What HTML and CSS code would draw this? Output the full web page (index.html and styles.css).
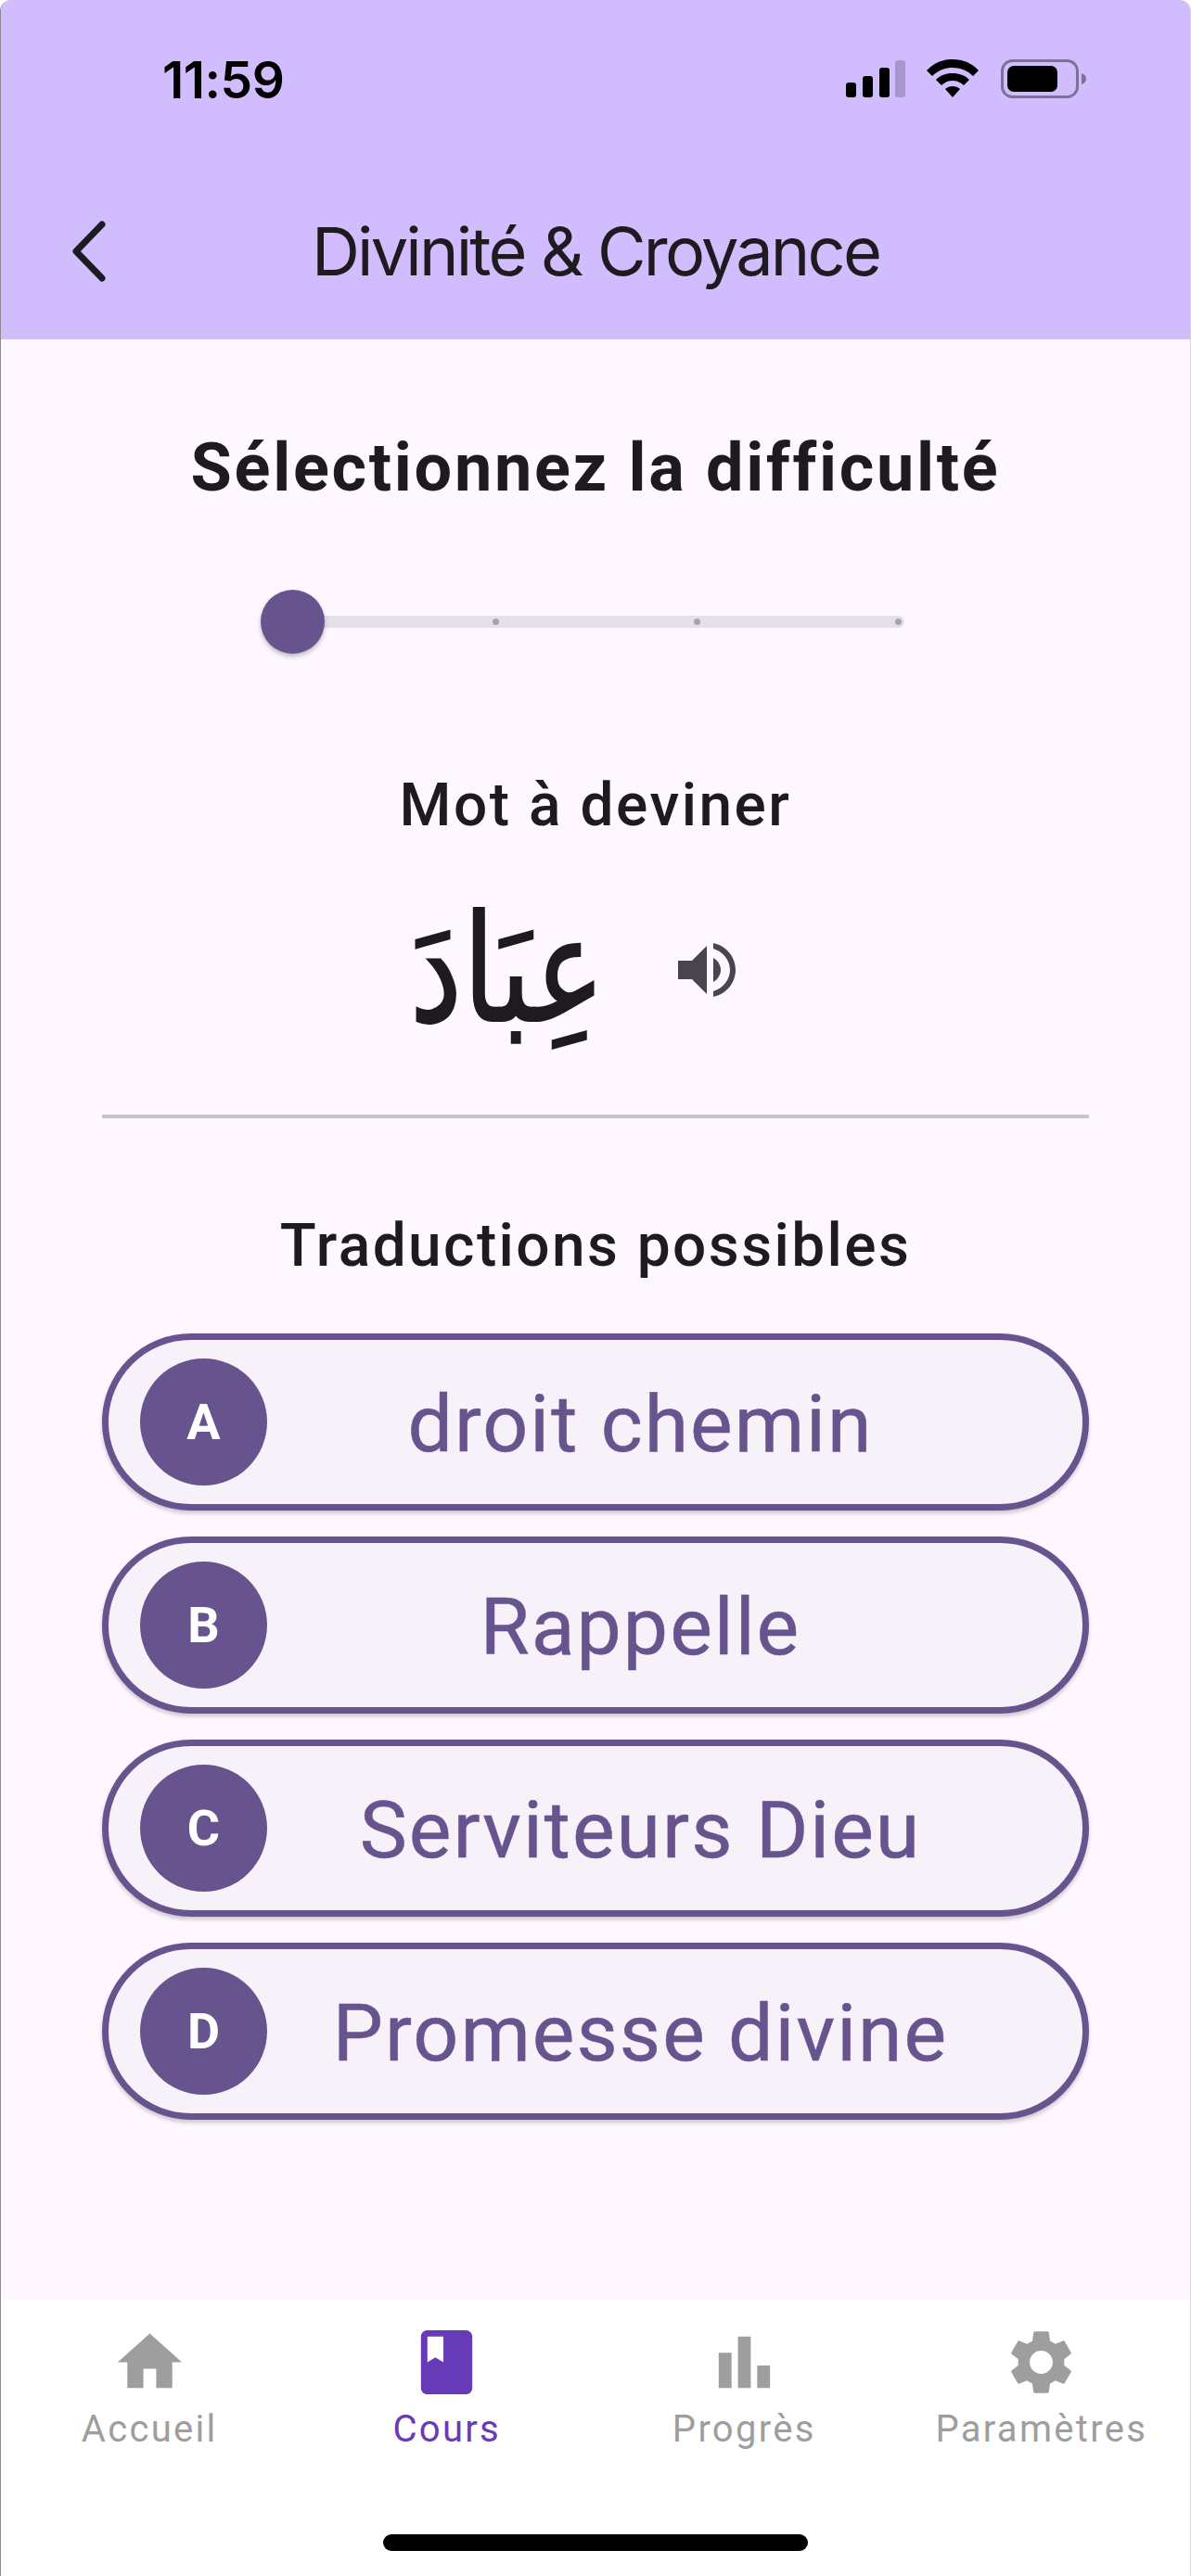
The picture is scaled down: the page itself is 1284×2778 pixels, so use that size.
FILE: index.html
```html
<!DOCTYPE html>
<html lang="fr">
<head>
    <meta charset="UTF-8">
    <title>Divinité &amp; Croyance</title>
    <link rel="stylesheet" href="styles.css">
</head>
<body>
    <div class="phone">
        <header class="top">
            <div class="status">
                <span class="time">11:59</span>
                <div class="status-icons">
                    <svg class="signal" width="64" height="40" viewBox="0 0 64 40">
                        <rect x="0" y="24" width="11" height="16" rx="3"/>
                        <rect x="18" y="17" width="11" height="23" rx="3"/>
                        <rect x="36" y="8" width="11" height="32" rx="3"/>
                        <rect x="53" y="0" width="11" height="40" rx="3" opacity="0.2"/>
                    </svg>
                    <svg class="wifi" width="58" height="42" viewBox="0 0 58 42">
                        <path d="M29 0C18 0 8 4 1 12l6 6c6-6 14-9 22-9s16 3 22 9l6-6C50 4 40 0 29 0z"/>
                        <path d="M29 15c-7 0-13 2-18 7l6 6c3-3 7-5 12-5s9 2 12 5l6-6c-5-5-11-7-18-7z"/>
                        <path d="M29 29c-3 0-6 1-8 3l8 9 8-9c-2-2-5-3-8-3z"/>
                    </svg>
                    <svg class="battery" width="93" height="42" viewBox="0 0 93 42">
                        <rect x="1.5" y="1.5" width="81" height="39" rx="11" fill="none" stroke="#000" stroke-opacity="0.4" stroke-width="3"/>
                        <rect x="7" y="7" width="54" height="28" rx="7"/>
                        <path d="M87 15c3 1 5 3 5 6s-2 5-5 6z" opacity="0.4"/>
                    </svg>
                </div>
            </div>
            <div class="appbar">
                <svg class="back" width="40" height="66" viewBox="0 0 40 66">
                    <path d="M34 4 6 33l28 29" fill="none" stroke="#1d1b20" stroke-width="7" stroke-linecap="round" stroke-linejoin="round"/>
                </svg>
                <h1>Divinité &amp; Croyance</h1>
            </div>
        </header>

        <main class="content">
            <h2 class="difficulty-title">Sélectionnez la difficulté</h2>
            <div class="slider">
                <div class="thumb"></div>
                <i class="tick"></i>
                <i class="tick"></i>
                <i class="tick"></i>
            </div>

            <h3 class="word-label">Mot à deviner</h3>
            <div class="word-row">
                <span class="word" lang="ar" dir="rtl">عِبَادَ</span>
                <svg class="speaker" width="62" height="58" viewBox="0 0 62 58">
                    <path d="M0 19h15L31 3v52L15 39H0z"/>
                    <path d="M38 16c5 3 8 8 8 13s-3 10-8 13z"/>
                    <path d="M38 0c14 3 24 15 24 29s-10 26-24 29v-6c10-3 18-12 18-23S48 9 38 6z"/>
                </svg>
            </div>
            <hr class="divider">

            <h3 class="options-title">Traductions possibles</h3>
            <div class="options">
                <div class="option"><span class="letter">A</span><span class="option-text">droit chemin</span></div>
                <div class="option"><span class="letter">B</span><span class="option-text">Rappelle</span></div>
                <div class="option"><span class="letter">C</span><span class="option-text">Serviteurs Dieu</span></div>
                <div class="option"><span class="letter">D</span><span class="option-text">Promesse divine</span></div>
            </div>
        </main>

        <nav class="tabs">
            <div class="tab">
                <svg viewBox="0 0 24 24"><path d="M10 20v-6h4v6h5v-8h3L12 3 2 12h3v8z"/></svg>
                <span>Accueil</span>
            </div>
            <div class="tab active">
                <svg viewBox="0 0 24 24"><path fill-rule="evenodd" d="M18 2H6c-1.1 0-2 .9-2 2v16c0 1.1.9 2 2 2h12c1.1 0 2-.9 2-2V4c0-1.1-.9-2-2-2zM6 4h5v8l-2.5-1.5L6 12V4z"/></svg>
                <span>Cours</span>
            </div>
            <div class="tab">
                <svg viewBox="0 0 24 24"><path d="M4 9h4v11H4zm12 4h4v7h-4zm-6-9h4v16h-4z"/></svg>
                <span>Progrès</span>
            </div>
            <div class="tab">
                <svg viewBox="0 0 24 24"><path d="M19.14 12.94c.04-.3.06-.61.06-.94 0-.32-.02-.64-.07-.94l2.03-1.58c.18-.14.23-.41.12-.61l-1.92-3.32c-.12-.22-.37-.29-.59-.22l-2.39.96c-.5-.38-1.03-.7-1.62-.94l-.36-2.54c-.04-.24-.24-.41-.48-.41h-3.84c-.24 0-.43.17-.47.41l-.36 2.54c-.59.24-1.13.57-1.62.94l-2.39-.96c-.22-.08-.47 0-.59.22L2.74 8.87c-.12.21-.08.47.12.61l2.03 1.58c-.05.3-.09.63-.09.94s.02.64.07.94l-2.03 1.58c-.18.14-.23.41-.12.61l1.92 3.32c.12.22.37.29.59.22l2.39-.96c.5.38 1.03.7 1.62.94l.36 2.54c.05.24.24.41.48.41h3.84c.24 0 .44-.17.47-.41l.36-2.54c.59-.24 1.13-.56 1.62-.94l2.39.96c.22.08.47 0 .59-.22l1.92-3.32c.12-.22.07-.47-.12-.61l-2.01-1.58zM12 15.6c-1.98 0-3.6-1.62-3.6-3.6s1.62-3.6 3.6-3.6 3.6 1.62 3.6 3.6-1.62 3.6-3.6 3.6z"/></svg>
                <span>Paramètres</span>
            </div>
        </nav>
        <div class="home-bar"><div class="home-indicator"></div></div>
    </div>
</body>
</html>
```

FILE: styles.css
```css
* {
    box-sizing: border-box;
}
body {
    margin: 0;
    background: #fff;
    font-family: Roboto, "Noto Sans", sans-serif;
    color: #1d1b20;
}
.phone {
    width: 1284px;
    height: 2778px;
    display: flex;
    flex-direction: column;
    background: #fef7ff;
    border-left: 1px solid #8d8a92;
    border-right: 1px solid #d8d4dc;
    border-radius: 12px 12px 0 0;
    overflow: hidden;
}

/* header */
.top {
    height: 366px;
    flex: none;
    background: #d1bcfe;
}
.status {
    height: 172px;
    display: flex;
    justify-content: space-between;
    align-items: flex-start;
    padding: 64px 111px 0 174px;
}
.time {
    font-family: Inter, sans-serif;
    font-size: 55px;
    font-weight: 600;
    line-height: 44px;
    letter-spacing: -0.5px;
    color: #000;
}
.status-icons {
    display: flex;
    align-items: center;
    gap: 22px;
}
.wifi {
    margin-right: 1px;
}
.appbar {
    position: relative;
    height: 194px;
    padding-top: 59px;
    text-align: center;
}
.back {
    position: absolute;
    left: 75px;
    top: 66px;
}
h1 {
    margin: 0;
    font-family: Inter, sans-serif;
    font-size: 72px;
    font-weight: 400;
    line-height: 80px;
    letter-spacing: -2.8px;
    color: #1d1b20;
}

/* content */
.content {
    flex: 1;
    padding-top: 99px;
    display: flex;
    flex-direction: column;
    align-items: center;
}
.difficulty-title {
    margin: 0;
    font-size: 72px;
    font-weight: 700;
    line-height: 80px;
    letter-spacing: 2.7px;
}
.slider {
    position: relative;
    width: 690px;
    height: 13px;
    margin: 119px 24px 0 0;
    background: #e6e0e9;
    border-radius: 7px;
    display: flex;
    justify-content: flex-end;
    align-items: center;
    gap: 210px;
    padding-right: 3px;
}
.tick {
    width: 7px;
    height: 7px;
    border-radius: 50%;
    background: #a8a3ad;
}
.thumb {
    position: absolute;
    left: -4px;
    top: -28px;
    width: 69px;
    height: 69px;
    border-radius: 50%;
    background: #67548e;
    box-shadow: 0 3px 5px rgba(0, 0, 0, 0.25);
}
.word-label {
    margin: 157px 0 0;
    font-size: 64px;
    font-weight: 500;
    line-height: 70px;
    letter-spacing: 2.5px;
}
.word-row {
    display: flex;
    align-items: center;
    height: 150px;
    margin: 67px 50px 0 0;
    gap: 78px;
}
.word {
    font-family: "DejaVu Sans", sans-serif;
    font-size: 128px;
    line-height: 150px;
    transform: scaleY(1.25);
    -webkit-text-stroke: 1.5px #1d1b20;
}
.speaker {
    fill: #49454f;
}
.divider {
    width: 1064px;
    height: 4px;
    margin: 81px 0 0;
    border: 0;
    background: #cac4d0;
}
.options-title {
    margin: 103px 0 0;
    font-size: 64px;
    font-weight: 500;
    line-height: 70px;
    letter-spacing: 2.4px;
}
.options {
    margin-top: 59px;
    display: flex;
    flex-direction: column;
    gap: 28px;
}
.option {
    width: 1064px;
    height: 191px;
    display: flex;
    align-items: center;
    padding-left: 34px;
    background: #f7f2fa;
    border: 7px solid #67548e;
    border-radius: 96px;
    box-shadow: 0 3px 4px rgba(0, 0, 0, 0.2);
}
.letter {
    width: 137px;
    height: 137px;
    flex: none;
    display: flex;
    align-items: center;
    justify-content: center;
    border-radius: 50%;
    background: #67548e;
    color: #fff;
    font-size: 54px;
    font-weight: 700;
}
.option-text {
    flex: 1;
    padding: 3px 74px 0 0;
    text-align: center;
    color: #67548e;
    font-size: 86px;
    letter-spacing: 2px;
    -webkit-text-stroke: 0.5px #67548e;
}

/* bottom navigation */
.tabs {
    height: 212px;
    flex: none;
    display: grid;
    grid-template-columns: repeat(4, 1fr);
    background: #fff;
    padding-top: 26px;
}
.tab {
    display: flex;
    flex-direction: column;
    align-items: center;
    color: #9e9e9e;
    font-size: 40px;
    line-height: 46px;
    letter-spacing: 2.3px;
}
.tab svg {
    width: 83px;
    height: 83px;
    fill: #9e9e9e;
    margin-bottom: 8px;
}
.tab.active {
    color: #673ab7;
}
.tab.active svg {
    fill: #673ab7;
}
.home-bar {
    height: 86px;
    flex: none;
    background: #fff;
    padding-top: 41px;
}
.home-indicator {
    width: 458px;
    height: 18px;
    margin: 0 auto;
    border-radius: 9px;
    background: #000;
}
```
